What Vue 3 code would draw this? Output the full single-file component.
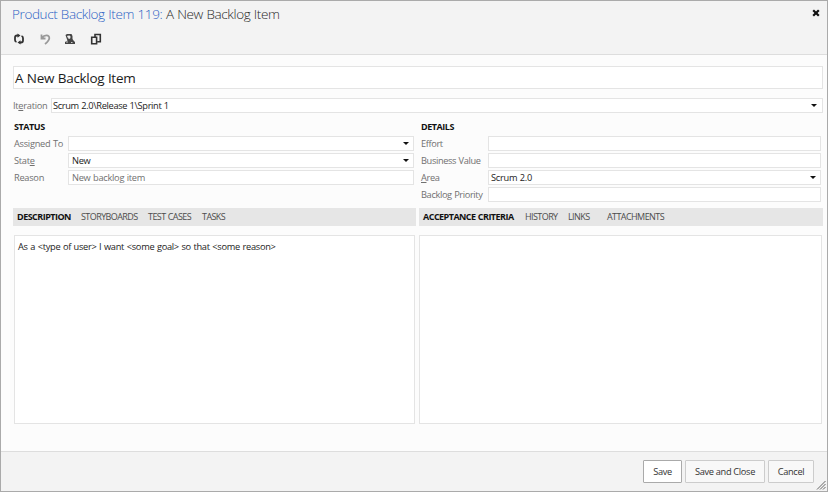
<script setup>
import { ref } from 'vue'

const leftTabs = ['DESCRIPTION', 'STORYBOARDS', 'TEST CASES', 'TASKS']
const rightTabs = ['ACCEPTANCE CRITERIA', 'HISTORY', 'LINKS', 'ATTACHMENTS']
const leftTab = ref(leftTabs[0])
const rightTab = ref(rightTabs[0])

const statusFields = [
  { pre: 'Assigned To', value: '', select: true },
  { pre: 'Stat', key: 'e', value: 'New', select: true },
  { pre: 'Reason', value: 'New backlog item', muted: true },
]
const detailFields = [
  { pre: 'Effort', value: '' },
  { pre: 'Business Value', value: '' },
  { key: 'A', post: 'rea', value: 'Scrum 2.0', select: true },
  { pre: 'Backlog Priority', value: '' },
]
const slug = (t) => 't-' + t.toLowerCase().replace(' ', '-')
</script>

<template>
  <div class="dialog">
    <header class="head">
      <h1 class="title"><span class="kind">Product Backlog Item 119:</span> <span class="name">A New Backlog Item</span></h1>
      <svg class="close" viewBox="0 0 8 8"><path d="M1.2 1.2 6.8 6.8M6.8 1.2 1.2 6.8" fill="none" stroke="#111" stroke-width="2.2" /></svg>
      <div class="tools">
        <svg class="ico" viewBox="0 0 12 12"><g fill="none" stroke="#333" stroke-width="1.8"><path d="M5 2.500H4Q2 2.500 2 4.500V7Q2 8.500 3.500 9M7 9.500H8Q10 9.500 10 7.500V5Q10 3.500 8.500 3" /></g><path d="M4.500 .5 7.500 2.500 4.500 4.800ZM7.500 7.200 4.500 9.500 7.500 11.500Z" fill="#333" /></svg>
        <svg class="ico" viewBox="0 0 12 12"><path d="M2.500 1.500V5.500H6.500M2.800 5C5.500 1.300 10.500 1.600 10.300 5.200Q10.100 7.600 6 11" fill="none" stroke="#999" stroke-width="1.800" /></svg>
        <svg class="ico" viewBox="0 0 12 12"><path d="M1.500 2 3 1H7.500L8.500 3V6L9.500 7.500 11 9V11H1V9L3.500 7.500 2.500 5Z" fill="#444" /><path d="M3.500 3H6V5.300H4.500ZM2 9H4M7 9.500H8.500M2 6.500H3" fill="#eee" stroke="#eee" stroke-width=".8" /></svg>
        <svg class="ico" viewBox="0 0 12 12"><path d="M5 3.500V1.500H10.300V8.800H7.500M1.700 4.300H6.600V10.800H1.700Z" fill="none" stroke="#333" stroke-width="1.600" /></svg>
      </div>
    </header>

    <main class="body">
      <div class="name-field">A New Backlog Item</div>
      <div class="iteration">
        <label class="label">It<u>e</u>ration</label>
        <div class="field"><span>Scrum 2.0\Release 1\Sprint 1</span><i class="arrow"></i></div>
      </div>

      <div class="columns">
        <section class="col status">
          <h2 class="group">STATUS</h2>
          <div v-for="(f, i) in statusFields" :key="i" class="row">
            <label class="label">{{ f.pre }}<u v-if="f.key">{{ f.key }}</u>{{ f.post }}</label>
            <div class="field" :class="{ muted: f.muted }"><span>{{ f.value }}</span><i v-if="f.select" class="arrow"></i></div>
          </div>
        </section>
        <section class="col details">
          <h2 class="group">DETAILS</h2>
          <div v-for="(f, i) in detailFields" :key="i" class="row">
            <label class="label">{{ f.pre }}<u v-if="f.key">{{ f.key }}</u>{{ f.post }}</label>
            <div class="field"><span>{{ f.value }}</span><i v-if="f.select" class="arrow"></i></div>
          </div>
        </section>
      </div>

      <div class="panes">
        <section class="pane left">
          <nav class="tabs"><a v-for="t in leftTabs" :key="t" class="tab" :class="[slug(t), { active: t === leftTab }]" @click="leftTab = t">{{ t }}</a></nav>
          <div class="editor">As a &lt;type of user&gt; I want &lt;some goal&gt; so that &lt;some reason&gt;</div>
        </section>
        <section class="pane right">
          <nav class="tabs"><a v-for="t in rightTabs" :key="t" class="tab" :class="[slug(t), { active: t === rightTab }]" @click="rightTab = t">{{ t }}</a></nav>
          <div class="editor"></div>
        </section>
      </div>
    </main>

    <footer class="foot">
      <button class="btn save">Save</button>
      <button class="btn save-close">Save and Close</button>
      <button class="btn cancel">Cancel</button>
      <svg class="grip" viewBox="0 0 10 10"><path d="M1 9.500 9.500 1M4 9.500 9.500 4M7 9.500 9.500 7" stroke="#666" fill="none" /></svg>
    </footer>
  </div>
</template>

<style>
body { margin: 0; background: #fcfcfc; }
</style>

<style scoped>
* { box-sizing: border-box; }
.dialog {
  position: relative;
  display: flex;
  flex-direction: column;
  width: 828px;
  height: 492px;
  border: 1px solid #aaa;
  background: #fcfcfc;
  color: #1c1c1c;
  font: 9.25px/12px "Open Sans", "Noto Sans", sans-serif;
  letter-spacing: -0.27px;
  word-spacing: 0.4px;
}
.head { position: relative; height: 54px; padding: 4px 0 0 11px; background: #f3f3f3; border-bottom: 1px solid #ddd; }
.title { margin: 0; height: 20px; font-size: 13.5px; line-height: 19px; font-weight: 300; letter-spacing: -0.38px; white-space: nowrap; }
.kind { color: #2c62c4; }
.name { color: #2a2a2a; }
.close { position: absolute; top: 8px; right: 7px; width: 8px; height: 8px; }
.tools { display: flex; gap: 13.5px; padding: 8px 0 0 1px; }
.ico { width: 12px; height: 12px; }
.body { display: flex; flex-direction: column; flex: 1; padding: 11px 4px 0 12px; }
.name-field { height: 23px; padding-left: 1px; border: 1px solid #e4e4e4; background: #fff; font-size: 13.5px; line-height: 22px; letter-spacing: -0.3px; }
.iteration { display: flex; height: 15px; margin-top: 9px; }
.iteration .label { width: 38px; }
.iteration .field { padding: 0 5px 0 1px; letter-spacing: -0.34px; }
.label { color: #707070; line-height: 16px; white-space: nowrap; }
.label u { text-underline-offset: 1px; text-decoration-thickness: 1px; }
.field { position: relative; display: flex; align-items: center; justify-content: space-between; flex: 1; padding: 0 4px 0 3px; border: 1px solid #e4e4e4; background: #fff; white-space: nowrap; line-height: 13px; }
.field.muted { color: #707070; }
.arrow { border: 3px solid transparent; border-top-color: #111; border-bottom: 0; }
.columns { display: flex; padding: 7px 2px 0 1px; height: 89px; }
.col { display: flex; flex-direction: column; gap: 2px; }
.status { width: 400px; margin-right: 7px; }
.details { flex: 1; }
.details .field { padding-left: 2px; }
.group { margin: 0; height: 14px; font-size: 9px; line-height: 14px; font-weight: 700; letter-spacing: -0.45px; color: #111; }
.row { display: flex; height: 15px; }
.status .label { width: 54px; }
.details .label { width: 67px; letter-spacing: -0.37px; }
.panes { display: flex; gap: 3px; margin-top: 6px; }
.left { width: 403px; }
.right { flex: 1; }
.tabs { display: flex; height: 18px; padding-left: 4px; background: #e6e6e6; font-size: 9px; letter-spacing: -0.58px; }
.tab { line-height: 18px; color: #4c4c4c; white-space: nowrap; cursor: pointer; }
.tab.active { color: #111; font-weight: 700; letter-spacing: -0.53px; }
.t-description { width: 64px; }
.t-storyboards { width: 67px; }
.t-test-cases { width: 54px; }
.t-acceptance-criteria { width: 102px; }
.t-history { width: 43px; }
.t-links { width: 39px; }
.editor { height: 189px; margin: 9px 1px 0; padding: 5px 3px; border: 1px solid #e4e4e4; background: #fff; }
.right .editor { margin-left: 0; }
.foot { position: relative; display: flex; justify-content: flex-end; gap: 3px; height: 40px; padding: 8px 13px 0 0; background: #f3f3f3; border-top: 1px solid #ddd; }
.btn { height: 23px; padding: 1px 0 0; border: 1px solid #ccc; border-radius: 1px; background: #f8f8f8; color: #333; font: inherit; letter-spacing: -0.32px; }
.save { width: 39px; border-color: #aaa; background: #fff; }
.save-close { width: 80px; }
.cancel { width: 46px; }
.grip { position: absolute; right: 1px; bottom: 1px; width: 10px; height: 10px; }
</style>
